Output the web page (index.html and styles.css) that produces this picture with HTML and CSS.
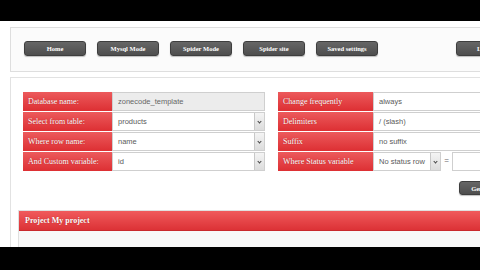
FILE: index.html
```html
<!DOCTYPE html>
<html>
<head>
<meta charset="utf-8">
<link rel="stylesheet" href="styles.css">
</head>
<body>
<div class="screen">
  <div class="black black-top"></div>
  <div class="page">
    <div class="nav">
      <span class="btn">Home</span>
      <span class="btn">Mysql Mode</span>
      <span class="btn">Spider Mode</span>
      <span class="btn">Spider site</span>
      <span class="btn">Saved settings</span>
      <span class="btn btn-far">Logout</span>
    </div>
    <div class="main">
      <div class="form">
        <div class="col col-left">
          <div class="row"><span class="label">Database name:</span><span class="field disabled">zonecode_template</span></div>
          <div class="row"><span class="label">Select from table:</span><span class="field select">products<i class="arrow"></i></span></div>
          <div class="row"><span class="label">Where row name:</span><span class="field select">name<i class="arrow"></i></span></div>
          <div class="row"><span class="label">And Custom variable:</span><span class="field select">id<i class="arrow"></i></span></div>
        </div>
        <div class="col col-right">
          <div class="row"><span class="label label-r">Change frequently</span><span class="field wide">always</span></div>
          <div class="row"><span class="label label-r">Delimiters</span><span class="field wide">/ (slash)</span></div>
          <div class="row"><span class="label label-r">Suffix</span><span class="field wide">no suffix</span></div>
          <div class="row"><span class="label label-r">Where Status variable</span><span class="field select small">No status row<i class="arrow"></i></span><span class="eq">=</span><span class="field wide last"></span></div>
        </div>
      </div>
      <div class="actions"><span class="btn btn-go">Generate</span></div>
      <div class="project">
        <div class="project-bar">Project My project</div>
        <div class="project-body"></div>
      </div>
    </div>
  </div>
  <div class="black black-bottom"></div>
</div>
</body>
</html>
```
FILE: styles.css
```css
html, body {
  margin: 0;
  padding: 0;
  background: #000;
}
.screen {
  width: 480px;
  height: 270px;
  overflow: hidden;
  display: flex;
  flex-direction: column;
  background: #000;
}
.black {
  background: #000;
  flex-shrink: 0;
}
.black-top {
  height: 21px;
}
.black-bottom {
  height: 23px;
}
.page {
  height: 226px;
  flex-shrink: 0;
  box-sizing: border-box;
  background: #fff;
  overflow: hidden;
  padding: 6px 0 0 10px;
  display: flex;
  flex-direction: column;
  gap: 5px;
}
.nav {
  width: 520px;
  border: 1px solid #dedede;
  background: #fbfbfb;
  display: flex;
  align-items: flex-start;
  padding: 13px 0 0 13px;
  box-sizing: border-box;
  height: 45px;
  gap: 11px;
  flex-shrink: 0;
}
.btn {
  width: 62px;
  height: 15px;
  box-sizing: border-box;
  background: linear-gradient(#666, #4e4e4e);
  border: 1px solid #3e3e3e;
  border-radius: 3px;
  color: #fff;
  font-family: "Liberation Serif", serif;
  font-weight: bold;
  font-size: 6.5px;
  line-height: 13px;
  text-align: center;
  flex-shrink: 0;
  white-space: nowrap;
  overflow: hidden;
  box-shadow: 0 1px 1px rgba(0,0,0,0.25);
}
.btn-far {
  margin-left: 67px;
}
.main {
  width: 520px;
  flex: 1;
  min-height: 0;
  border: 1px solid #e2e2e2;
  border-bottom: none;
  background: #fff;
  padding: 14px 0 0 12px;
  box-sizing: border-box;
  display: flex;
  flex-direction: column;
  overflow: hidden;
}
.form {
  display: flex;
  gap: 13px;
}
.col {
  display: flex;
  flex-direction: column;
  gap: 1px;
}
.row {
  display: flex;
  height: 19px;
  align-items: stretch;
}
.label {
  width: 89px;
  box-sizing: border-box;
  background: linear-gradient(#ec5a5c, #dd2f33);
  color: #fff;
  font-family: "Liberation Serif", serif;
  font-size: 8px;
  line-height: 19px;
  padding-left: 5px;
  text-shadow: 0 0 1px rgba(120,0,0,0.6);
  white-space: nowrap;
}
.label-r {
  width: 95px;
}
.field {
  position: relative;
  width: 153px;
  box-sizing: border-box;
  border: 1px solid #cfcfcf;
  background: #fff;
  color: #5a5a5a;
  font-family: "Liberation Sans", sans-serif;
  font-size: 7.5px;
  line-height: 17px;
  padding-left: 5px;
  white-space: nowrap;
}
.field.disabled {
  background: #ececec;
  color: #666;
}
.field.wide {
  width: 140px;
}
.field.small {
  width: 68px;
}
.arrow {
  position: absolute;
  right: 0;
  top: 0;
  bottom: 0;
  width: 9px;
  border-left: 1px solid #c8c8c8;
  background: linear-gradient(#f4f4f4, #dcdcdc);
}
.arrow::after {
  content: "";
  position: absolute;
  left: 3px;
  top: 7px;
  width: 2px;
  height: 2px;
  border-right: 1px solid #444;
  border-bottom: 1px solid #444;
  transform: rotate(45deg);
}
.eq {
  width: 11px;
  text-align: center;
  font-family: "Liberation Sans", sans-serif;
  font-size: 8px;
  color: #666;
  line-height: 17px;
}
.field.last {
  width: 60px;
}
.actions {
  display: flex;
  padding: 10px 0 0 436px;
}
.btn-go {
  height: 14px;
  width: 50px;
}
.project {
  margin: 15px 0 0 -5px;
  border: 1px solid #e0e0e0;
  border-bottom: none;
  flex: 1;
  display: flex;
  flex-direction: column;
}
.project-bar {
  height: 20px;
  flex-shrink: 0;
  box-sizing: border-box;
  background: linear-gradient(#f05a5c, #dc3236);
  border-bottom: 1px solid #c9292c;
  color: #fff;
  font-family: "Liberation Serif", serif;
  font-weight: bold;
  font-size: 8px;
  line-height: 19px;
  padding-left: 6px;
  text-shadow: 0 0 1px rgba(120,0,0,0.6);
}
.project-body {
  flex: 1;
  background: #f8f8f8;
}
```
